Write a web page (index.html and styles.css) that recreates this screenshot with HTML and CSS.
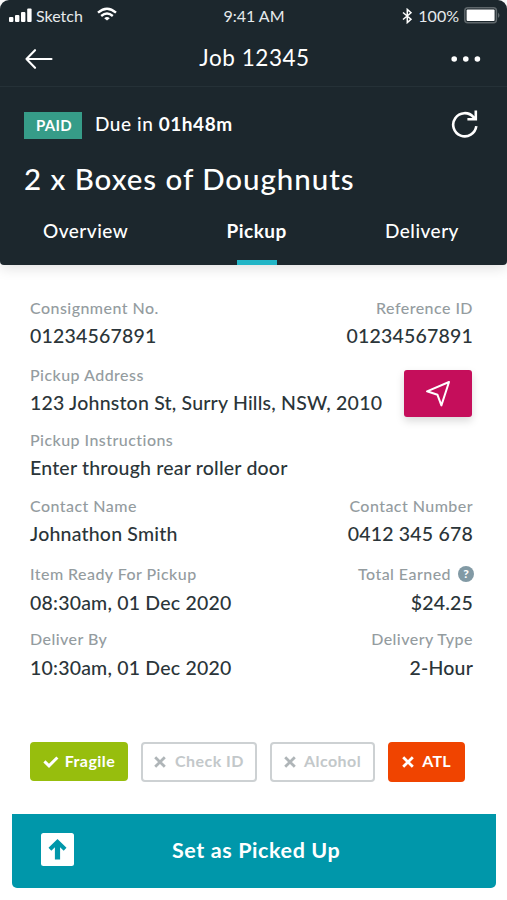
FILE: index.html
```html
<!DOCTYPE html>
<html lang="en">
<head>
<meta charset="utf-8">
<title>Job 12345</title>
<link rel="stylesheet" href="styles.css">
</head>
<body>
<main class="screen">
  <header class="header">
    <div class="status">
      <div class="status-left">
        <svg class="signal" width="24" height="15" viewBox="0 0 24 15" fill="#fff"><rect x="0" y="9" width="4.4" height="5" rx="1"/><rect x="6" y="7" width="4.4" height="7" rx="1"/><rect x="12" y="4" width="4.4" height="10" rx="1"/><rect x="18.2" y="0.5" width="4.4" height="13.5" rx="1"/></svg>
        <span class="carrier">Sketch</span>
        <svg class="wifi" width="20" height="15" viewBox="0 0 20 15" fill="none" stroke="#fff" stroke-width="2.4"><path d="M1 5.6Q10-2.2 19 5.6M4.2 9Q10 4 15.8 9"/><path d="M10 13.6 7.2 11.2Q10 8.9 12.8 11.2Z" fill="#fff" stroke="none"/></svg>
      </div>
      <span class="clock">9:41 AM</span>
      <div class="status-right">
        <svg width="11" height="16" viewBox="0 0 11 16" fill="none" stroke="#fff" stroke-width="1.5"><path d="M1 4.5 9 11.2 5.3 14.6V1.4L9 4.8 1 11.5"/></svg>
        <span class="percent">100%</span>
        <svg width="37" height="17" viewBox="0 0 37 17"><rect x=".8" y=".8" width="31.6" height="15" rx="3" fill="none" stroke="#5f676b" stroke-width="1.5"/><rect x="2.6" y="2.5" width="28" height="11.6" rx="1" fill="#fff"/><path d="M34 5.5Q37 8.3 34 11Z" fill="#5f676b"/></svg>
      </div>
    </div>
    <nav class="nav">
      <svg width="28" height="20" viewBox="0 0 28 20" fill="none" stroke="#fff" stroke-width="2.1" stroke-linecap="round" stroke-linejoin="round"><path d="M26.5 10H1.5M10 1.2 1.5 10 10 18.8"/></svg>
      <h1 class="nav-title">Job 12345</h1>
      <svg width="30" height="6" viewBox="0 0 30 6" fill="#fff"><circle cx="3.2" cy="3" r="2.8"/><circle cx="14.8" cy="3" r="2.8"/><circle cx="26.4" cy="3" r="2.8"/></svg>
    </nav>
    <div class="summary">
      <span class="badge">PAID</span>
      <span class="due">Due in <b>01h48m</b></span>
      <svg class="refresh" width="28" height="30" viewBox="0 0 28 30" fill="none" stroke="#fff" stroke-width="2.6"><path d="M25.3 17.2A11.6 11.6 0 1 1 22.5 8.1L24.6 10.3M24.8 1.5V10.3H16.4"/></svg>
    </div>
    <h2 class="job-name">2 x Boxes of Doughnuts</h2>
    <div class="tabs">
      <span class="tab overview">Overview</span>
      <span class="tab active">Pickup</span>
      <span class="tab delivery">Delivery</span>
    </div>
  </header>

  <section class="details">
    <div class="row"><div class="field"><p class="label">Consignment No.</p><p class="value">01234567891</p></div><div class="field right"><p class="label">Reference ID</p><p class="value">01234567891</p></div></div>
    <div class="row">
      <div class="field"><p class="label">Pickup Address</p><p class="value">123 Johnston St, Surry Hills, NSW, 2010</p></div>
      <button class="navigate" aria-label="Navigate"><svg width="26" height="28" viewBox="0 0 26 28" fill="none" stroke="#fff" stroke-width="2" stroke-linejoin="round"><path d="M24 2 2 11.3 12.5 14.8 16.4 25.4Z"/></svg></button>
    </div>
    <div class="row"><div class="field"><p class="label">Pickup Instructions</p><p class="value">Enter through rear roller door</p></div></div>
    <div class="row"><div class="field"><p class="label">Contact Name</p><p class="value">Johnathon Smith</p></div><div class="field right"><p class="label">Contact Number</p><p class="value">0412 345 678</p></div></div>
    <div class="row timing"><div class="field"><p class="label">Item Ready For Pickup</p><p class="value">08:30am, 01 Dec 2020</p></div><div class="field right"><p class="label with-help">Total Earned <span class="help">?</span></p><p class="value">$24.25</p></div></div>
    <div class="row timing"><div class="field"><p class="label">Deliver By</p><p class="value">10:30am, 01 Dec 2020</p></div><div class="field right"><p class="label">Delivery Type</p><p class="value">2-Hour</p></div></div>
  </section>

  <div class="tags">
    <span class="tag fragile"><svg width="16" height="12" viewBox="0 0 16 12" fill="none" stroke="#fff" stroke-width="3"><path d="M1.4 5.4 6 9.8 14.4 1.5"/></svg><span>Fragile</span></span>
    <span class="tag check"><svg width="12" height="12" viewBox="0 0 12 12" fill="none" stroke="#afb5b8" stroke-width="2.8"><path d="M1.2 1.2 10.8 10.8M10.8 1.2 1.2 10.8"/></svg><span>Check ID</span></span>
    <span class="tag alcohol"><svg width="12" height="12" viewBox="0 0 12 12" fill="none" stroke="#afb5b8" stroke-width="2.8"><path d="M1.2 1.2 10.8 10.8M10.8 1.2 1.2 10.8"/></svg><span>Alcohol</span></span>
    <span class="tag atl"><svg width="12" height="12" viewBox="0 0 12 12" fill="none" stroke="#fff" stroke-width="2.8"><path d="M1.2 1.2 10.8 10.8M10.8 1.2 1.2 10.8"/></svg><span>ATL</span></span>
  </div>

  <button class="submit">
    <svg width="33" height="33" viewBox="0 0 33 33"><rect width="33" height="33" rx="2.5" fill="#fff"/><path d="M16.5 6 25.5 14.8 22.7 17.7 19.1 14.3V26.6H13.9V14.3L10.3 17.7 7.5 14.8Z" fill="#0097aa"/></svg>
    <span>Set as Picked Up</span>
  </button>
</main>
</body>
</html>
```
FILE: styles.css
```css
* { box-sizing: border-box; }
body { margin: 0; background: #fff; font-family: Lato, "Liberation Sans", sans-serif; color: #2b3539; }
h1, h2, p { margin: 0; font-weight: 500; }
svg { display: block; flex: none; }
button { border: 0; padding: 0; font-family: inherit; }
span, p, h1, h2 { white-space: nowrap; }
.screen { width: 507px; height: 900px; overflow: hidden; }

.header { height: 265px; background: #1c272d; color: #fff; border-radius: 9px 9px 4px 4px; box-shadow: 0 3px 14px rgba(0,0,0,.13); }
.status { height: 32px; display: grid; grid-template-columns: 1fr auto 1fr; align-items: center; padding: 0 8px 0 9px; font-size: 16px; line-height: 32px; color: #e6eaec; }
.status-left, .status-right { display: flex; align-items: center; }
.status-left svg { margin-bottom: 2px; }
.status-left .wifi { margin-left: 14px; margin-bottom: 3px; }
.status-right svg { margin-bottom: 1px; }
.status-right { justify-content: flex-end; gap: 5px; margin-right: -2px; }
.carrier { margin-left: 3px; }
.nav { height: 55px; display: flex; align-items: center; justify-content: space-between; padding: 0 26px 1px 25px; border-bottom: 1px solid #253137; }
.nav-title { font-size: 22.5px; line-height: 30px; letter-spacing: .55px; font-weight: 400; padding: 0 0 2px 5px; }
.summary { height: 62px; display: flex; align-items: center; padding: 13px 28px 0 24px; }
.badge { width: 58px; height: 27px; margin-top: 2px; padding-left: 2px; background: #369c88; font-size: 15px; line-height: 27px; font-weight: 700; letter-spacing: .3px; text-align: center; }
.due { margin: 0 0 2px 13px; font-size: 19px; letter-spacing: .55px; line-height: 26px; font-weight: 500; }
.refresh { margin: 0 0 2px auto; }
.job-name { font-size: 29.5px; line-height: 36px; letter-spacing: .95px; padding: 12px 24px 0; }
.tabs { height: 68px; display: flex; justify-content: space-between; padding: 0 48px 0 43px; font-size: 19px; line-height: 68px; letter-spacing: .5px; font-weight: 500; }
.active { font-weight: 700; position: relative; }
.active::after { content: ""; position: absolute; left: 11px; bottom: 0; width: 40px; height: 5px; background: #22b5c6; }

.details { display: grid; grid-template-rows: 67px 65px 66px 68px 65px 52px; padding: 31px 34px 0 30px; }
.row { display: flex; justify-content: space-between; }
.right { text-align: right; }
.label { font-size: 16px; line-height: 24px; letter-spacing: .45px; color: #949c9f; }
.value { font-size: 19.5px; line-height: 31px; letter-spacing: .2px; color: #2b3539; }
.timing .value { line-height: 33px; }
.navigate { width: 68px; height: 47px; margin: 7px 1px 0 0; display: grid; place-items: center; background: #c50e5b; border-radius: 3px; box-shadow: 0 4px 8px rgba(0,0,0,.15); }
.with-help { display: flex; align-items: center; gap: 7px; margin-right: -1px; }
.help { width: 16px; height: 16px; border-radius: 50%; background: #829aa5; color: #fff; font-size: 12px; line-height: 16px; font-weight: 900; text-align: center; letter-spacing: 0; }

.tags { display: flex; padding: 63px 0 0 30px; height: 103px; }
.tag { height: 40px; display: flex; align-items: center; justify-content: center; border: 2px solid #cdd1d3; border-radius: 4px; font-size: 16px; line-height: 20px; font-weight: 700; letter-spacing: .45px; color: #c3c8ca; }
.tag span { margin-bottom: 2px; }
.fragile { width: 98px; gap: 6px; background: #97be0d; border-color: #97be0d; color: #fff; height: 39px; }
.check { width: 116px; margin-left: 13px; gap: 9px; }
.alcohol { width: 105px; margin-left: 13px; gap: 8px; }
.atl { width: 77px; margin-left: 13px; gap: 8px; letter-spacing: .2px; background: #f04400; border-color: #f04400; color: #fff; }

.submit { width: 484px; height: 74px; margin: 32px 0 0 12px; display: flex; align-items: center; padding: 0 0 3px 29px; background: #0097aa; border-radius: 0 0 5px 5px; color: #fff; font-size: 21.5px; font-weight: 700; letter-spacing: .6px; }
.submit span { margin-left: 98px; }
```
